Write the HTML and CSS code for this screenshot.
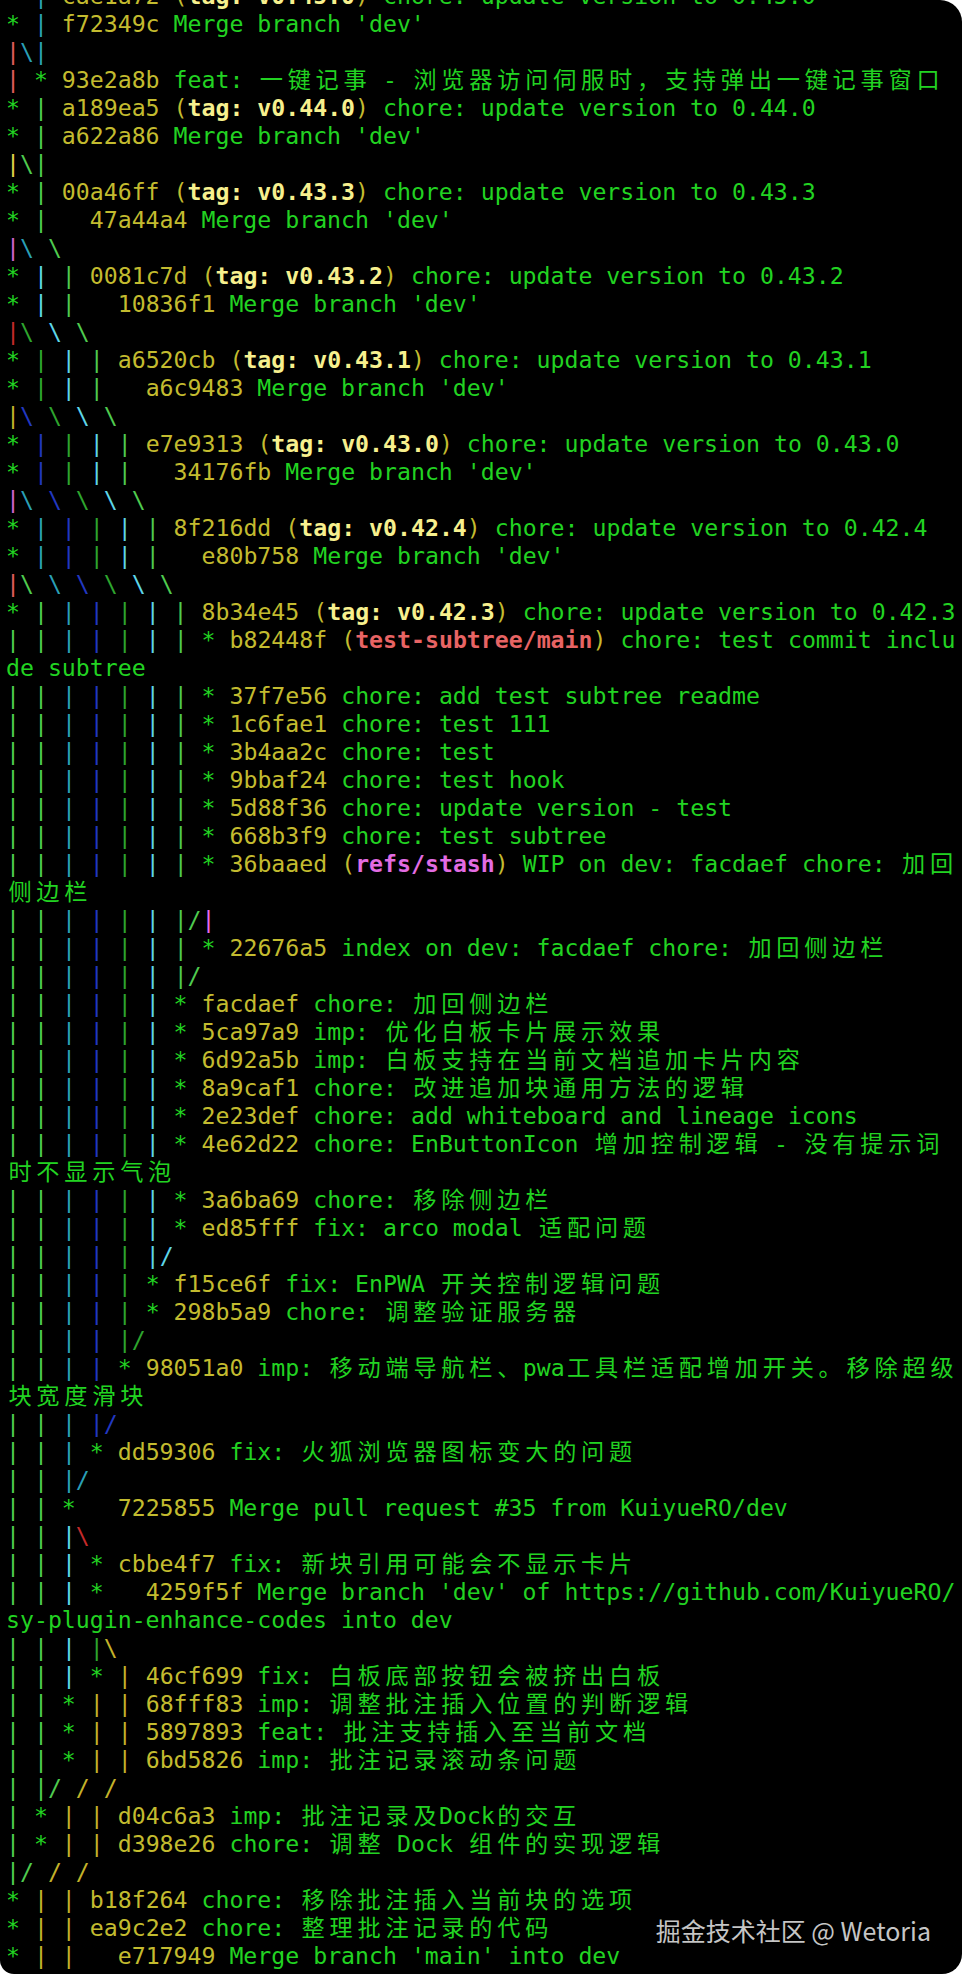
FILE: index.html
```html
<!DOCTYPE html>
<html lang="zh-CN">
<head>
<meta charset="utf-8">
<title>git log --graph</title>
<link rel="stylesheet" href="styles.css">
</head>
<body>
<div class="term">
<div class="log">
<div class="l">* <span class="gt">|</span> <span class="h">cae1a72</span> <span class="h">(</span><span class="t">tag: v0.45.0</span><span class="h">)</span> chore: update version to 0.45.0</div>
<div class="l">* <span class="gt">|</span> <span class="h">f72349c</span> Merge branch 'dev'</div>
<div class="l"><span class="gr">|</span><span class="gt">\</span><span class="gt">|</span></div>
<div class="l"><span class="gr">|</span> * <span class="h">93e2a8b</span> feat: <span class="w">一键记事</span> - <span class="w">浏览器访问伺服时，支持弹出一键记事窗口</span></div>
<div class="l">* <span class="gG">|</span> <span class="h">a189ea5</span> <span class="h">(</span><span class="t">tag: v0.44.0</span><span class="h">)</span> chore: update version to 0.44.0</div>
<div class="l">* <span class="gG">|</span> <span class="h">a622a86</span> Merge branch 'dev'</div>
<div class="l"><span class="gy">|</span><span class="gG">\</span><span class="gG">|</span></div>
<div class="l">* <span class="gG">|</span> <span class="h">00a46ff</span> <span class="h">(</span><span class="t">tag: v0.43.3</span><span class="h">)</span> chore: update version to 0.43.3</div>
<div class="l">* <span class="gG">|</span>   <span class="h">47a44a4</span> Merge branch 'dev'</div>
<div class="l"><span class="gm">|</span><span class="gt">\</span> <span class="gG">\</span></div>
<div class="l">* <span class="gc">|</span> <span class="gG">|</span> <span class="h">0081c7d</span> <span class="h">(</span><span class="t">tag: v0.43.2</span><span class="h">)</span> chore: update version to 0.43.2</div>
<div class="l">* <span class="gc">|</span> <span class="gG">|</span>   <span class="h">10836f1</span> Merge branch 'dev'</div>
<div class="l"><span class="gR">|</span><span class="gg">\</span> <span class="gc">\</span> <span class="gG">\</span></div>
<div class="l">* <span class="gg">|</span> <span class="gc">|</span> <span class="gG">|</span> <span class="h">a6520cb</span> <span class="h">(</span><span class="t">tag: v0.43.1</span><span class="h">)</span> chore: update version to 0.43.1</div>
<div class="l">* <span class="gg">|</span> <span class="gc">|</span> <span class="gG">|</span>   <span class="h">a6c9483</span> Merge branch 'dev'</div>
<div class="l"><span class="gY">|</span><span class="gb">\</span> <span class="gg">\</span> <span class="gc">\</span> <span class="gG">\</span></div>
<div class="l">* <span class="gb">|</span> <span class="gg">|</span> <span class="gc">|</span> <span class="gG">|</span> <span class="h">e7e9313</span> <span class="h">(</span><span class="t">tag: v0.43.0</span><span class="h">)</span> chore: update version to 0.43.0</div>
<div class="l">* <span class="gb">|</span> <span class="gg">|</span> <span class="gc">|</span> <span class="gG">|</span>   <span class="h">34176fb</span> Merge branch 'dev'</div>
<div class="l"><span class="gm">|</span><span class="gt">\</span> <span class="gb">\</span> <span class="gg">\</span> <span class="gc">\</span> <span class="gG">\</span></div>
<div class="l">* <span class="gt">|</span> <span class="gb">|</span> <span class="gg">|</span> <span class="gc">|</span> <span class="gG">|</span> <span class="h">8f216dd</span> <span class="h">(</span><span class="t">tag: v0.42.4</span><span class="h">)</span> chore: update version to 0.42.4</div>
<div class="l">* <span class="gt">|</span> <span class="gb">|</span> <span class="gg">|</span> <span class="gc">|</span> <span class="gG">|</span>   <span class="h">e80b758</span> Merge branch 'dev'</div>
<div class="l"><span class="gr">|</span><span class="gG">\</span> <span class="gt">\</span> <span class="gb">\</span> <span class="gg">\</span> <span class="gc">\</span> <span class="gG">\</span></div>
<div class="l">* <span class="gG">|</span> <span class="gt">|</span> <span class="gb">|</span> <span class="gg">|</span> <span class="gc">|</span> <span class="gG">|</span> <span class="h">8b34e45</span> <span class="h">(</span><span class="t">tag: v0.42.3</span><span class="h">)</span> chore: update version to 0.42.3</div>
<div class="l"><span class="gG">|</span> <span class="gG">|</span> <span class="gt">|</span> <span class="gb">|</span> <span class="gg">|</span> <span class="gc">|</span> <span class="gG">|</span> * <span class="h">b82448f</span> <span class="h">(</span><span class="rr">test-subtree/main</span><span class="h">)</span> chore: test commit inclu</div>
<div class="l">de subtree</div>
<div class="l"><span class="gG">|</span> <span class="gG">|</span> <span class="gt">|</span> <span class="gb">|</span> <span class="gg">|</span> <span class="gc">|</span> <span class="gG">|</span> * <span class="h">37f7e56</span> chore: add test subtree readme</div>
<div class="l"><span class="gG">|</span> <span class="gG">|</span> <span class="gt">|</span> <span class="gb">|</span> <span class="gg">|</span> <span class="gc">|</span> <span class="gG">|</span> * <span class="h">1c6fae1</span> chore: test 111</div>
<div class="l"><span class="gG">|</span> <span class="gG">|</span> <span class="gt">|</span> <span class="gb">|</span> <span class="gg">|</span> <span class="gc">|</span> <span class="gG">|</span> * <span class="h">3b4aa2c</span> chore: test</div>
<div class="l"><span class="gG">|</span> <span class="gG">|</span> <span class="gt">|</span> <span class="gb">|</span> <span class="gg">|</span> <span class="gc">|</span> <span class="gG">|</span> * <span class="h">9bbaf24</span> chore: test hook</div>
<div class="l"><span class="gG">|</span> <span class="gG">|</span> <span class="gt">|</span> <span class="gb">|</span> <span class="gg">|</span> <span class="gc">|</span> <span class="gG">|</span> * <span class="h">5d88f36</span> chore: update version - test</div>
<div class="l"><span class="gG">|</span> <span class="gG">|</span> <span class="gt">|</span> <span class="gb">|</span> <span class="gg">|</span> <span class="gc">|</span> <span class="gG">|</span> * <span class="h">668b3f9</span> chore: test subtree</div>
<div class="l"><span class="gG">|</span> <span class="gG">|</span> <span class="gt">|</span> <span class="gb">|</span> <span class="gg">|</span> <span class="gc">|</span> <span class="gG">|</span> * <span class="h">36baaed</span> <span class="h">(</span><span class="rm">refs/stash</span><span class="h">)</span> WIP on dev: facdaef chore: <span class="w">加回</span></div>
<div class="l"><span class="w">侧边栏</span></div>
<div class="l"><span class="gG">|</span> <span class="gG">|</span> <span class="gt">|</span> <span class="gb">|</span> <span class="gg">|</span> <span class="gc">|</span> <span class="gG">|</span><span class="gG">/</span><span class="gp">|</span></div>
<div class="l"><span class="gG">|</span> <span class="gG">|</span> <span class="gt">|</span> <span class="gb">|</span> <span class="gg">|</span> <span class="gc">|</span> <span class="gG">|</span> * <span class="h">22676a5</span> index on dev: facdaef chore: <span class="w">加回侧边栏</span></div>
<div class="l"><span class="gG">|</span> <span class="gG">|</span> <span class="gt">|</span> <span class="gb">|</span> <span class="gg">|</span> <span class="gc">|</span> <span class="gG">|</span><span class="gG">/</span></div>
<div class="l"><span class="gG">|</span> <span class="gG">|</span> <span class="gt">|</span> <span class="gb">|</span> <span class="gg">|</span> <span class="gc">|</span> * <span class="h">facdaef</span> chore: <span class="w">加回侧边栏</span></div>
<div class="l"><span class="gG">|</span> <span class="gG">|</span> <span class="gt">|</span> <span class="gb">|</span> <span class="gg">|</span> <span class="gc">|</span> * <span class="h">5ca97a9</span> imp: <span class="w">优化白板卡片展示效果</span></div>
<div class="l"><span class="gG">|</span> <span class="gG">|</span> <span class="gt">|</span> <span class="gb">|</span> <span class="gg">|</span> <span class="gc">|</span> * <span class="h">6d92a5b</span> imp: <span class="w">白板支持在当前文档追加卡片内容</span></div>
<div class="l"><span class="gG">|</span> <span class="gG">|</span> <span class="gt">|</span> <span class="gb">|</span> <span class="gg">|</span> <span class="gc">|</span> * <span class="h">8a9caf1</span> chore: <span class="w">改进追加块通用方法的逻辑</span></div>
<div class="l"><span class="gG">|</span> <span class="gG">|</span> <span class="gt">|</span> <span class="gb">|</span> <span class="gg">|</span> <span class="gc">|</span> * <span class="h">2e23def</span> chore: add whiteboard and lineage icons</div>
<div class="l"><span class="gG">|</span> <span class="gG">|</span> <span class="gt">|</span> <span class="gb">|</span> <span class="gg">|</span> <span class="gc">|</span> * <span class="h">4e62d22</span> chore: EnButtonIcon <span class="w">增加控制逻辑</span> - <span class="w">没有提示词</span></div>
<div class="l"><span class="w">时不显示气泡</span></div>
<div class="l"><span class="gG">|</span> <span class="gG">|</span> <span class="gt">|</span> <span class="gb">|</span> <span class="gg">|</span> <span class="gc">|</span> * <span class="h">3a6ba69</span> chore: <span class="w">移除侧边栏</span></div>
<div class="l"><span class="gG">|</span> <span class="gG">|</span> <span class="gt">|</span> <span class="gb">|</span> <span class="gg">|</span> <span class="gc">|</span> * <span class="h">ed85fff</span> fix: arco modal <span class="w">适配问题</span></div>
<div class="l"><span class="gG">|</span> <span class="gG">|</span> <span class="gt">|</span> <span class="gb">|</span> <span class="gg">|</span> <span class="gc">|</span><span class="gc">/</span></div>
<div class="l"><span class="gG">|</span> <span class="gG">|</span> <span class="gt">|</span> <span class="gb">|</span> <span class="gg">|</span> * <span class="h">f15ce6f</span> fix: EnPWA <span class="w">开关控制逻辑问题</span></div>
<div class="l"><span class="gG">|</span> <span class="gG">|</span> <span class="gt">|</span> <span class="gb">|</span> <span class="gg">|</span> * <span class="h">298b5a9</span> chore: <span class="w">调整验证服务器</span></div>
<div class="l"><span class="gG">|</span> <span class="gG">|</span> <span class="gt">|</span> <span class="gb">|</span> <span class="gg">|</span><span class="gg">/</span></div>
<div class="l"><span class="gG">|</span> <span class="gG">|</span> <span class="gt">|</span> <span class="gb">|</span> * <span class="h">98051a0</span> imp: <span class="w">移动端导航栏、</span>pwa<span class="w">工具栏适配增加开关。移除超级</span></div>
<div class="l"><span class="w">块宽度滑块</span></div>
<div class="l"><span class="gG">|</span> <span class="gG">|</span> <span class="gt">|</span> <span class="gb">|</span><span class="gb">/</span></div>
<div class="l"><span class="gG">|</span> <span class="gG">|</span> <span class="gt">|</span> * <span class="h">dd59306</span> fix: <span class="w">火狐浏览器图标变大的问题</span></div>
<div class="l"><span class="gG">|</span> <span class="gG">|</span> <span class="gt">|</span><span class="gt">/</span></div>
<div class="l"><span class="gG">|</span> <span class="gG">|</span> *   <span class="h">7225855</span> Merge pull request #35 from KuiyueRO/dev</div>
<div class="l"><span class="gG">|</span> <span class="gG">|</span> <span class="gc">|</span><span class="gR">\</span></div>
<div class="l"><span class="gG">|</span> <span class="gG">|</span> <span class="gc">|</span> * <span class="h">cbbe4f7</span> fix: <span class="w">新块引用可能会不显示卡片</span></div>
<div class="l"><span class="gG">|</span> <span class="gG">|</span> <span class="gc">|</span> *   <span class="h">4259f5f</span> Merge branch 'dev' of https://github.com/KuiyueRO/</div>
<div class="l">sy-plugin-enhance-codes into dev</div>
<div class="l"><span class="gG">|</span> <span class="gG">|</span> <span class="gc">|</span> <span class="gg">|</span><span class="gY">\</span></div>
<div class="l"><span class="gG">|</span> <span class="gG">|</span> <span class="gc">|</span> * <span class="gY">|</span> <span class="h">46cf699</span> fix: <span class="w">白板底部按钮会被挤出白板</span></div>
<div class="l"><span class="gG">|</span> <span class="gG">|</span> * <span class="gY">|</span> <span class="gY">|</span> <span class="h">68fff83</span> imp: <span class="w">调整批注插入位置的判断逻辑</span></div>
<div class="l"><span class="gG">|</span> <span class="gG">|</span> * <span class="gY">|</span> <span class="gY">|</span> <span class="h">5897893</span> feat: <span class="w">批注支持插入至当前文档</span></div>
<div class="l"><span class="gG">|</span> <span class="gG">|</span> * <span class="gY">|</span> <span class="gY">|</span> <span class="h">6bd5826</span> imp: <span class="w">批注记录滚动条问题</span></div>
<div class="l"><span class="gG">|</span> <span class="gG">|</span><span class="gG">/</span> <span class="gY">/</span> <span class="gY">/</span></div>
<div class="l"><span class="gG">|</span> * <span class="gY">|</span> <span class="gY">|</span> <span class="h">d04c6a3</span> imp: <span class="w">批注记录及</span>Dock<span class="w">的交互</span></div>
<div class="l"><span class="gG">|</span> * <span class="gY">|</span> <span class="gY">|</span> <span class="h">d398e26</span> chore: <span class="w">调整</span> Dock <span class="w">组件的实现逻辑</span></div>
<div class="l"><span class="gG">|</span><span class="gG">/</span> <span class="gY">/</span> <span class="gY">/</span></div>
<div class="l">* <span class="gY">|</span> <span class="gY">|</span> <span class="h">b18f264</span> chore: <span class="w">移除批注插入当前块的选项</span></div>
<div class="l">* <span class="gY">|</span> <span class="gY">|</span> <span class="h">ea9c2e2</span> chore: <span class="w">整理批注记录的代码</span></div>
<div class="l">* <span class="gY">|</span> <span class="gY">|</span>   <span class="h">e717949</span> Merge branch 'main' into dev</div>
</div>
<div class="mark">掘金技术社区 @ Wetoria</div>
</div>
</body>
</html>
```
FILE: styles.css
```css
html, body {
  margin: 0;
  padding: 0;
  background: #ffffff;
}

.term {
  position: relative;
  width: 962px;
  height: 1974px;
  background: #000000;
  border-radius: 0 22px 20px 14px;
  overflow: hidden;
}

.log {
  margin-top: -18px;
  padding-left: 6px;
  font-family: "DejaVu Sans Mono", "Noto Sans CJK SC", monospace;
  font-size: 23.2px;
  line-height: 28px;
  color: #22d322;
}

.l {
  height: 28px;
  white-space: pre;
}

.w {
  letter-spacing: 4.76px;
  padding-left: 2.38px;
  margin-right: -2.38px;
}

.h { color: #c3bb2f; }
.t { color: #f7f08e; font-weight: bold; }
.rr { color: #e86464; font-weight: bold; }
.rm { color: #e36ce3; font-weight: bold; }

/* graph lane colours */
.gr { color: #e05a5a; }
.gR { color: #c42a2a; }
.gt { color: #2a9fb6; }
.gc { color: #5ed6e8; }
.gg { color: #2ea52e; }
.gG { color: #4fcb4f; }
.gy { color: #e0d048; }
.gY { color: #c3b22a; }
.gb { color: #2238c0; }
.gm { color: #d062d0; }
.gp { color: #e868e8; }

.mark {
  position: absolute;
  right: 31px;
  bottom: 30px;
  font-family: "Noto Sans CJK SC", "Noto Sans", sans-serif;
  font-size: 25px;
  line-height: 28px;
  color: rgba(235, 235, 235, 0.85);
  white-space: nowrap;
}
```
